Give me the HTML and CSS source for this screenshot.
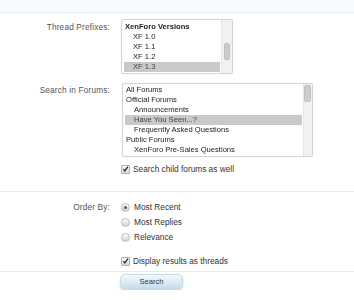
FILE: index.html
```html
<!DOCTYPE html>
<html lang="en">
<head>
  <meta charset="UTF-8">
  <title>Search Threads</title>
  <link rel="stylesheet" href="styles.css">
</head>
<body>
  <div class="topbar"></div>

  <!-- Prefixes and forums -->
  <div class="section first">
    <div class="row">
      <div class="label">Thread Prefixes:</div>
      <div class="listbox prefixes">
        <div class="options">
          <div class="opt group">XenForo Versions</div>
          <div class="opt sub">XF 1.0</div>
          <div class="opt sub">XF 1.1</div>
          <div class="opt sub">XF 1.2</div>
          <div class="opt sub selected">XF 1.3</div>
        </div>
        <div class="scrollbar"><div class="thumb"></div></div>
      </div>
    </div>

    <div class="row forums-row">
      <div class="label">Search in Forums:</div>
      <div class="listbox forums">
        <div class="options">
          <div class="opt">All Forums</div>
          <div class="opt">Official Forums</div>
          <div class="opt sub">Announcements</div>
          <div class="opt sub selected">Have You Seen...?</div>
          <div class="opt sub">Frequently Asked Questions</div>
          <div class="opt">Public Forums</div>
          <div class="opt sub">XenForo Pre-Sales Questions</div>
        </div>
        <div class="scrollbar"><div class="thumb"></div></div>
      </div>
    </div>

    <div class="row check-row">
      <div class="label"></div>
      <label class="choice"><span class="check"><svg viewBox="0 0 8 8" width="8" height="8"><path d="M1.5 4.2 L3.3 6.2 L6.8 1.2" fill="none" stroke="#333" stroke-width="1.6"/></svg></span>Search child forums as well</label>
    </div>
  </div>

  <!-- Ordering -->
  <div class="section order">
    <div class="row">
      <div class="label">Order By:</div>
      <div class="radios">
        <label class="choice"><span class="radio on"></span>Most Recent</label>
        <label class="choice"><span class="radio"></span>Most Replies</label>
        <label class="choice"><span class="radio"></span>Relevance</label>
      </div>
    </div>
    <div class="row threads-row">
      <div class="label"></div>
      <label class="choice"><span class="check"><svg viewBox="0 0 8 8" width="8" height="8"><path d="M1.5 4.2 L3.3 6.2 L6.8 1.2" fill="none" stroke="#333" stroke-width="1.6"/></svg></span>Display results as threads</label>
    </div>
  </div>

  <div class="row submit-row">
    <div class="label"></div>
    <button class="search-btn">Search</button>
  </div>
</body>
</html>
```

FILE: styles.css
```css
body { margin: 0; background: #fff; font-family: "Liberation Sans", Arial, sans-serif; font-size: 8.3px; color: #333; }

.topbar { height: 12px; background: #f7fbfc; border-bottom: 1px solid #e2eef2; }

.section { border-bottom: 1px solid #e6ecee; }
.section.first { padding-top: 6px; padding-bottom: 17px; }
.section.order { padding-top: 10px; padding-bottom: 5px; }

.row { display: grid; grid-template-columns: 110px auto; column-gap: 11px; align-items: start; }
.label { text-align: right; color: #555; line-height: 10px; padding-top: 3px; letter-spacing: 0.15px; }

.listbox { display: flex; border: 1px solid #d4d4d4; border-radius: 2px; background: #fff; box-shadow: 0 0 1px rgba(0,0,0,0.08); overflow: hidden; }
.prefixes { width: 110px; height: 53px; }
.forums { width: 189px; height: 72px; margin-left: 1px; }

.options { flex: 1; padding: 2px 1px 0 2px; font-size: 7.6px; color: #222; will-change: transform; }
.forums .options { padding-top: 1px; }
.opt { line-height: 10px; padding-left: 1px; white-space: nowrap; }
.opt.sub { padding-left: 9px; }
.opt.group { font-weight: bold; }
.opt.selected { background: #c9c9c9; color: #444; }

.scrollbar { background: #f1f1f1; border-left: 1px solid #e6e6e6; }
.prefixes .scrollbar { width: 10px; }
.forums .scrollbar { width: 8px; }
.thumb { background: #cdcdcd; border: 1px solid #c0c0c0; border-radius: 2px; }
.prefixes .thumb { width: 4px; height: 15px; margin: 23px 0 0 2px; }
.forums .thumb { width: 5px; height: 15px; margin: 1px 0 0 0; }

.forums-row { margin-top: 9px; }
.forums-row .label { padding-top: 2px; }
.check-row { margin-top: 7px; }

.choice { display: flex; align-items: center; line-height: 10px; color: #333; white-space: nowrap; }
.check { display: inline-flex; width: 7px; height: 7px; margin-right: 3px; border: 1px solid #b0b0b0; border-radius: 1px; background: linear-gradient(#fafafa, #dadada); overflow: visible; }
.check svg { margin: -1px 0 0 0; }

.order .label { padding-top: 0; }
.radios { display: flex; flex-direction: column; gap: 5px; }
.radio { width: 7px; height: 7px; margin-right: 4px; border: 1px solid #bdbdbd; border-radius: 50%; background: linear-gradient(#fdfdfd, #d2d2d2); display: inline-flex; align-items: center; justify-content: center; }
.radio.on::after { content: ""; width: 3px; height: 3px; border-radius: 50%; background: #555; }

.threads-row { margin-top: 14px; }

.submit-row { margin-top: 2px; }
.search-btn { width: 63px; height: 16px; margin-left: -1px; padding: 0; border: 1px solid #c6dbe8; border-radius: 5px; background: linear-gradient(#f4f9fc, #c3dcec); box-shadow: 0 1px 2px rgba(0,0,0,0.18); font-family: "Liberation Sans", Arial, sans-serif; font-size: 7.6px; color: #333; line-height: 14px; }
```
